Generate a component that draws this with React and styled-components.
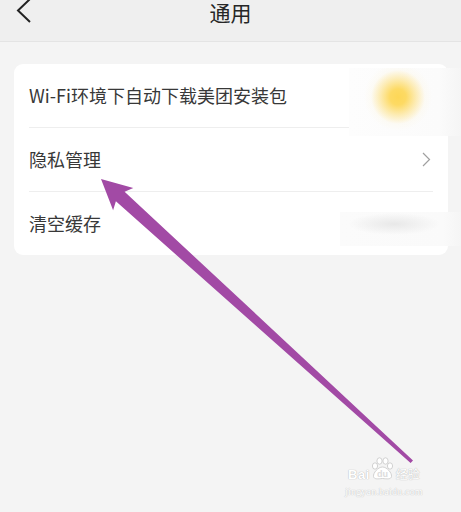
import React from 'react';
import styled, { createGlobalStyle } from 'styled-components';

const GlobalStyle = createGlobalStyle`
  html, body {
    margin: 0;
    padding: 0;
    background: #f4f4f4;
  }
  * {
    box-sizing: border-box;
  }
`;

const Page = styled.div`
  position: relative;
  width: 461px;
  height: 512px;
  overflow: hidden;
  background: #f4f4f4;
  font-family: "Noto Sans CJK SC", "Noto Sans", sans-serif;
  color: #333;
`;

const Header = styled.header`
  display: grid;
  grid-template-columns: 60px 1fr 60px;
  align-items: start;
  height: 42px;
  background: #efefef;
  border-bottom: 1px solid #e4e4e4;
`;

const BackButton = styled.div`
  display: flex;
  padding-left: 16px;
  margin-top: -2px;
`;

const Title = styled.h1`
  margin: 0;
  text-align: center;
  font-size: 21px;
  line-height: 25px;
  font-weight: 400;
  color: #262626;
`;

const Content = styled.main`
  padding: 22px 13px 0 14px;
`;

const Card = styled.section`
  background: #fff;
  border-radius: 9px;
  padding: 0 15px;
`;

const Row = styled.div`
  display: flex;
  align-items: center;
  justify-content: space-between;
  height: ${p => (p.$last ? '63px' : '64px')};
  border-bottom: ${p => (p.$last ? 'none' : '1px solid #eeeeee')};
  padding-bottom: 1px;
`;

const Label = styled.span`
  font-size: 18px;
  line-height: 24px;
  color: #383838;
`;

const Chevron = styled.svg`
  margin-right: 2px;
  margin-top: 1px;
`;

const Blur = styled.div`
  position: absolute;
  left: ${p => p.$x}px;
  top: ${p => p.$y}px;
  width: ${p => p.$w}px;
  height: ${p => p.$h}px;
  background: ${p => p.$bg};
`;

const ArrowLayer = styled.svg`
  position: absolute;
  left: 0;
  top: 0;
  pointer-events: none;
`;

const Watermark = styled.div`
  position: absolute;
  left: 345px;
  top: 457px;
  display: flex;
  flex-direction: column;
  align-items: center;
  color: #fff;
`;

const LogoRow = styled.div`
  display: flex;
  align-items: flex-end;
`;

const Bai = styled.span`
  font-family: "Liberation Sans", Arial, sans-serif;
  font-weight: 700;
  font-size: 13px;
  line-height: 11px;
  letter-spacing: 0.5px;
  color: #fff;
  text-shadow: 0 0 1px #bdbdbd, 0 0 1px #bdbdbd;
`;

const Jingyan = styled.span`
  font-size: 12px;
  line-height: 12px;
  color: #fff;
  text-shadow: 0 0 1px #bdbdbd, 0 0 1px #bdbdbd;
  margin-left: 1px;
`;

const Url = styled.span`
  margin-top: 7px;
  font-family: "Liberation Serif", serif;
  font-size: 10px;
  line-height: 10px;
  letter-spacing: 0.2px;
  color: #fff;
  text-shadow: 0 0 1px #c4c4c4, 0 0 1px #c4c4c4;
`;

const items = ['Wi-Fi环境下自动下载美团安装包', '隐私管理', '清空缓存'];

const App = () => {
  return (
    <Page>
      <GlobalStyle />
      <Header>
        <BackButton>
          <svg width="16" height="26" viewBox="0 0 16 26">
            <polyline points="14,1 2,12.5 14,24" fill="none" stroke="#222" strokeWidth="2" />
          </svg>
        </BackButton>
        <Title>通用</Title>
        <div />
      </Header>

      <Content>
        <Card>
          {items.map((text, i) => (
            <Row key={text} $last={i === items.length - 1}>
              <Label>{text}</Label>
              {i === 1 && (
                <Chevron width="9" height="15" viewBox="0 0 9 15">
                  <polyline points="1,1 7.5,7.5 1,14" fill="none" stroke="#a0a0a0" strokeWidth="1.2" />
                </Chevron>
              )}
            </Row>
          ))}
        </Card>
      </Content>

      {/* blurred switch and cache size */}
      <Blur
        $x={349}
        $y={68}
        $w={112}
        $h={68}
        $bg="radial-gradient(circle at 49px 29px, #fdd757 0, #fdda64 8px, rgba(253,222,120,0.55) 18px, rgba(255,240,200,0.15) 27px, rgba(255,255,255,0) 34px), linear-gradient(to right, #fdfdfd 0%, #fbfbfb 80%, #f5f5f5 100%)"
      />
      <Blur
        $x={340}
        $y={212}
        $w={121}
        $h={34}
        $bg="radial-gradient(ellipse 46px 11px at 54px 12px, #e8e8e8 0, rgba(236,236,236,0.7) 45%, rgba(250,250,250,0) 100%), linear-gradient(to right, #fbfbfb 0%, #fafafa 85%, #f5f5f5 100%)"
      />

      <ArrowLayer width="461" height="512" viewBox="0 0 461 512">
        <polygon
          points="101,179 133.3,188.1 124.6,191.7 413,460.4 410.6,463 115.9,201.3 113.1,210.3"
          fill="#a24aa5"
        />
      </ArrowLayer>

      <Watermark>
        <LogoRow>
          <Bai>Bai</Bai>
          <svg width="25" height="23" viewBox="0 0 25 23">
            <g fill="#fff" stroke="#c6c6c6" strokeWidth="0.8">
              <ellipse cx="5" cy="9" rx="2.6" ry="3.2" />
              <ellipse cx="9.5" cy="4" rx="2.6" ry="3.2" />
              <ellipse cx="15.5" cy="4" rx="2.6" ry="3.2" />
              <ellipse cx="20" cy="9" rx="2.6" ry="3.2" />
              <path d="M12.5 10 C8 10 3 16 3.5 19.5 C4 22.5 8 22 12.5 21.5 C17 22 21 22.5 21.5 19.5 C22 16 17 10 12.5 10 Z" />
            </g>
            <text
              x="12.5"
              y="20"
              textAnchor="middle"
              fontFamily="Liberation Sans, Arial, sans-serif"
              fontWeight="700"
              fontSize="9"
              fill="#dcdcdc"
            >
              du
            </text>
          </svg>
          <Jingyan>经验</Jingyan>
        </LogoRow>
        <Url>jingyan.baidu.com</Url>
      </Watermark>
    </Page>
  );
};

export default App;
